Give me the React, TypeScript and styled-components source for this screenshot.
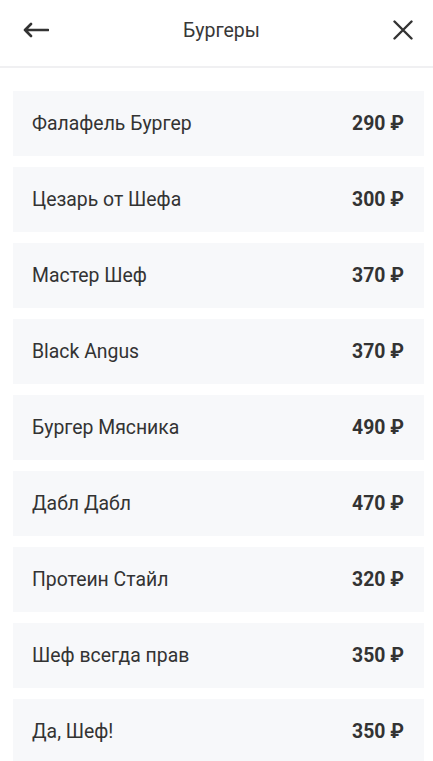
import React from "react";
import styled, { createGlobalStyle } from "styled-components";

const GlobalStyle = createGlobalStyle`
  html, body {
    margin: 0;
    padding: 0;
    background: #fff;
    font-family: Roboto, "Noto Sans", sans-serif;
    color: #333;
  }
`;

const StyledPage = styled.div`
  width: 433px;
  height: 761px;
  overflow: hidden;
  background: #fff;
`;

const StyledHeader = styled.div`
  box-sizing: border-box;
  height: 68px;
  display: flex;
  align-items: center;
  justify-content: space-between;
  padding: 0 16px 6px 22px;
  border-bottom: 2px solid #f0f0f2;
`;

const StyledTitle = styled.div`
  font-size: 19.5px;
  color: #383838;
  margin-left: 4px;
`;

const StyledIconButton = styled.div`
  width: 28px;
  height: 28px;
  display: flex;
  align-items: center;
  justify-content: center;
  color: #333;
`;

const StyledList = styled.div`
  display: flex;
  flex-direction: column;
  gap: 11px;
  padding: 23px 9px 0 13px;
`;

const StyledRow = styled.div`
  height: 65px;
  display: flex;
  align-items: center;
  justify-content: space-between;
  padding: 0 20px 0 19px;
  background: #f7f8fa;
  font-size: 19.4px;
`;

const StyledName = styled.span`
  color: #333;
`;

const StyledPrice = styled.span`
  font-weight: 700;
  color: #333;
`;

const items = [
  ["Фалафель Бургер", "290"],
  ["Цезарь от Шефа", "300"],
  ["Мастер Шеф", "370"],
  ["Black Angus", "370"],
  ["Бургер Мясника", "490"],
  ["Дабл Дабл", "470"],
  ["Протеин Стайл", "320"],
  ["Шеф всегда прав", "350"],
  ["Да, Шеф!", "350"],
];

const App = () => {
  return (
    <StyledPage>
      <GlobalStyle />
      <StyledHeader>
        <StyledIconButton>
          <svg width="26" height="16" viewBox="0 0 26 16" fill="none">
            <path
              d="M25 8H2M8 2L2 8L8 14"
              stroke="currentColor"
              strokeWidth="2.6"
              strokeLinecap="round"
              strokeLinejoin="round"
            />
          </svg>
        </StyledIconButton>
        <StyledTitle>Бургеры</StyledTitle>
        <StyledIconButton>
          <svg width="20" height="20" viewBox="0 0 20 20" fill="none">
            <path
              d="M1.5 1.5L18.5 18.5M18.5 1.5L1.5 18.5"
              stroke="currentColor"
              strokeWidth="2.4"
              strokeLinecap="round"
            />
          </svg>
        </StyledIconButton>
      </StyledHeader>
      <StyledList>
        {items.map(([name, price]) => (
          <StyledRow key={name}>
            <StyledName>{name}</StyledName>
            <StyledPrice>{price} ₽</StyledPrice>
          </StyledRow>
        ))}
      </StyledList>
    </StyledPage>
  );
};

export default App;
